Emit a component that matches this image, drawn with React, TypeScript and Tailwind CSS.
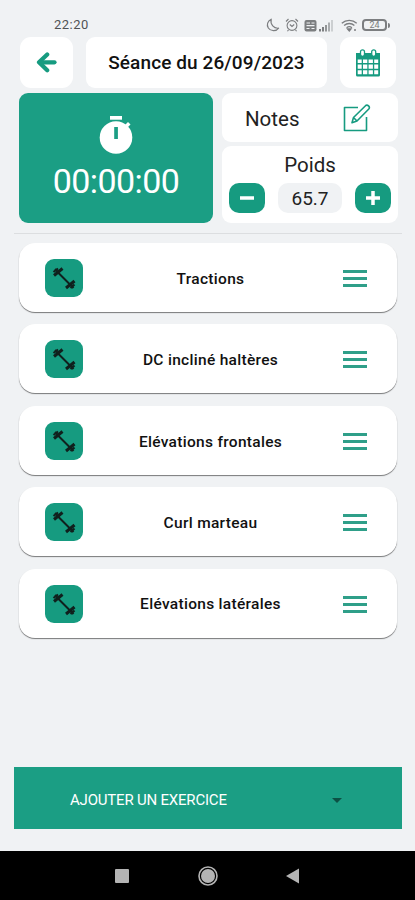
import { useState } from 'react';

const exercises = [
  'Tractions',
  'DC incliné haltères',
  'Elévations frontales',
  'Curl marteau',
  'Elévations latérales',
];

function StatusBar() {
  return (
    <div className="flex h-[37px] items-start justify-between pt-[17px] pr-[25px] pl-[54px] text-[#7c7e80]">
      <span className="text-[13px] leading-4 tracking-[0.5px] text-[#505254]">22:20</span>
      <div className="flex h-4 items-center">
        <svg className="mr-[5px] h-[14px] w-[14px]" viewBox="0 0 14 14" fill="none" stroke="currentColor" strokeWidth="1.2">
          <path d="M5.2 1.2C1.6 3 .3 7 2.3 10c2.2 3.4 8 3.6 10.3.2C8 10.7 4 6.5 5.2 1.2Z" strokeLinejoin="round" />
        </svg>
        <svg className="mr-[5px] h-[14px] w-[14px]" viewBox="0 0 14 14" fill="none" stroke="currentColor" strokeWidth="1.1">
          <circle cx="7" cy="7.5" r="4.9" />
          <path d="M1 3.5 3.5 1M13 3.5 10.5 1M4.8 6.5 7 8.5l2.2-2M3.5 11.8l-1 1.5M10.5 11.8l1 1.5" />
        </svg>
        <svg className="mr-[2px] h-[13px] w-[13px]" viewBox="0 0 13 13">
          <rect x="0.5" y="1" width="12" height="11.5" rx="2" fill="currentColor" />
          <path d="M2.5 4H6M7.5 4h3M2.5 6.6h8M2.5 9.5h3M7.5 9.5h3" stroke="#f0f2f4" strokeWidth="1.1" />
        </svg>
        <svg className="mr-[7px] h-[13px] w-[15px]" viewBox="0 0 15 13" fill="currentColor">
          <rect x="0" y="10" width="2" height="2.5" />
          <rect x="3" y="8" width="2" height="4.5" />
          <rect x="6" y="6" width="2" height="6.5" opacity=".8" />
          <rect x="9" y="3.5" width="2" height="9" opacity=".6" />
          <rect x="12" y="1" width="2" height="11.5" opacity=".3" />
        </svg>
        <svg className="mr-[4px] h-[13px] w-[17px]" viewBox="0 0 17 13" fill="none" stroke="currentColor" strokeWidth="1.3">
          <path d="M.8 4.2C5 .3 11.5.3 15.7 4.2M3.1 6.5c3-2.7 7.3-2.7 10.3 0M5.6 8.7c1.6-1.3 3.8-1.3 5.3 0" />
          <path d="M6.5 10H10l-1.7 2ZM13 11h2" fill="currentColor" />
        </svg>
        <div className="flex h-[12px] w-[25px] items-center justify-center rounded-[4px] border-2 border-current text-[9px] leading-none">
          24
        </div>
        <div className="ml-px h-[5px] w-[2px] rounded-r bg-current" />
      </div>
    </div>
  );
}

function CalendarIcon() {
  return (
    <svg className="h-[28px] w-[26px]" viewBox="0 0 26 28">
      <path d="M1 4h24v22a1.5 1.5 0 0 1-1.5 1.5h-21A1.5 1.5 0 0 1 1 26Z" fill="#169b80" />
      <rect x="5.5" y=".8" width="4" height="6.5" rx="2" fill="#fff" stroke="#169b80" strokeWidth="1.3" />
      <rect x="16.7" y=".8" width="4" height="6.5" rx="2" fill="#fff" stroke="#169b80" strokeWidth="1.3" />
      <path
        d="M2.7 10.5h4v3.6h-4zM8 10.5h4.3v3.6H8zM13.6 10.5h4.3v3.6h-4.3zM19.2 10.5h4v3.6h-4zM2.7 15.6h4v4.2h-4zM8 15.6h4.3v4.2H8zM13.6 15.6h4.3v4.2h-4.3zM19.2 15.6h4v4.2h-4zM2.7 21.3h4v4h-4zM8 21.3h4.3v4H8zM13.6 21.3h4.3v4h-4.3zM19.2 21.3h4v4h-4z"
        fill="#fff"
      />
    </svg>
  );
}

function Header() {
  return (
    <div className="flex h-[51px] pr-[19px] pl-[20px]">
      <button className="flex w-[53px] items-center justify-center rounded-[11px] bg-white">
        <svg className="h-[22px] w-[21px]" viewBox="0 0 21 22" fill="none" stroke="#169b80" strokeWidth="4.2" strokeLinejoin="round" strokeLinecap="round">
          <path d="M11.2 2.400 3 10.300l8.200 8" />
          <path d="M4 10.300h14.500" />
        </svg>
      </button>
      <div className="ml-[13px] flex w-[241px] items-center justify-center rounded-[9px] bg-white pt-px text-[19px] font-medium tracking-[0.1px] whitespace-nowrap text-[#111]">
        Séance du 26/09/2023
      </div>
      <button className="ml-[13px] flex w-[56px] items-center justify-center rounded-[11px] bg-white">
        <CalendarIcon />
      </button>
    </div>
  );
}

function Timer() {
  return (
    <div className="flex h-[130px] w-[194px] flex-col items-center rounded-[9px] bg-[#1b9e84] pt-[23px] text-white">
      <svg className="h-[38px] w-[34px]" viewBox="0 0 34 38">
        <circle cx="17" cy="21.5" r="16.3" fill="#fff" />
        <rect x="11" y="0" width="12" height="3.7" fill="#fff" />
        <path d="m26 9 3-3 2.5 2.5-3 3Z" fill="#fff" />
        <rect x="15.2" y="11" width="3.7" height="12" fill="#1b9e84" />
      </svg>
      <span className="mt-[7px] text-[34px] leading-[40px] tracking-[-0.6px]">00:00:00</span>
    </div>
  );
}

function WeightCard() {
  const [weight, setWeight] = useState(65.7);

  return (
    <div className="mt-[4px] flex h-[77px] flex-col items-center rounded-[9px] bg-white pt-[6px]">
      <span className="text-[20.5px] leading-[26px]">Poids</span>
      <div className="mt-[5px] flex w-full items-center justify-between pr-[7px] pl-[7px]">
        <button
          onClick={() => setWeight(weight - 0.1)}
          className="flex h-[30px] w-[36px] items-center justify-center rounded-[10px] bg-[#169b80]"
        >
          <svg className="h-4 w-4" viewBox="0 0 16 16" stroke="#fff" strokeWidth="3.5">
            <path d="M1 8h14" />
          </svg>
        </button>
        <div className="flex h-[30px] w-[64px] items-center justify-center rounded-[10px] bg-[#f0f2f4] pt-[2px] text-[19px]">
          {weight.toFixed(1)}
        </div>
        <button
          onClick={() => setWeight(weight + 0.1)}
          className="flex h-[30px] w-[36px] items-center justify-center rounded-[10px] bg-[#169b80]"
        >
          <svg className="h-4 w-4" viewBox="0 0 16 16" stroke="#fff" strokeWidth="3.5">
            <path d="M1 8h14M8 1v14" />
          </svg>
        </button>
      </div>
    </div>
  );
}

function NotesCard() {
  return (
    <div className="flex h-[49px] items-center justify-between rounded-[9px] bg-white pr-[27px] pl-[23px]">
      <span className="pt-[3px] text-[20.5px]">Notes</span>
      <svg className="h-[28px] w-[28px]" viewBox="0 0 28 28" fill="none" stroke="#169b80" strokeWidth="1.6" strokeLinejoin="round">
        <path d="M15 3.500H1.500v23h22V13" />
        <path d="m9 18.800 1.500-5.300L22.500 1.700c2-1.700 5 1.200 3.300 3.300L14 17ZM10.500 13.500 14 17" />
      </svg>
    </div>
  );
}

function DumbbellIcon() {
  return (
    <svg className="h-[24px] w-[24px]" viewBox="0 0 24 24" fill="none" stroke="#10201d">
      <path d="M5 5.500 19 19.500" strokeWidth="2" />
      <path d="m2 9.500 8.500-7M14 22l8.500-7" strokeWidth="3" />
      <path d="m1.500 6 4.500-3.500M18.500 22l4-3.500M3 3l3 3M18.500 19l3 3" strokeWidth="2.200" />
    </svg>
  );
}

function ExerciseCard({ name }: { name: string }) {
  return (
    <div className="flex h-[69px] items-center rounded-[16px] bg-white pt-px pr-[30px] pl-[26px] shadow-[0_1px_1px_rgba(0,0,0,0.5)]">
      <div className="flex h-[38px] w-[38px] items-center justify-center rounded-[9px] bg-[#169b80]">
        <DumbbellIcon />
      </div>
      <span className="flex-1 pt-[3px] pr-[5px] text-center text-[15.5px] font-medium tracking-[0.3px] whitespace-nowrap text-[#111]">
        {name}
      </span>
      <div className="flex w-[24px] flex-col gap-[4px] pt-px">
        <div className="h-[3px] bg-[#2f9f89]" />
        <div className="h-[3px] bg-[#2f9f89]" />
        <div className="h-[3px] bg-[#2f9f89]" />
      </div>
    </div>
  );
}

function NavigationBar() {
  return (
    <div className="flex h-[49px] items-center bg-black pl-[115px]">
      <div className="h-[14px] w-[14px] rounded-[1px] bg-[#b4b4b4]" />
      <svg className="ml-[69px] h-[20px] w-[20px]" viewBox="0 0 20 20">
        <circle cx="10" cy="10" r="9" fill="none" stroke="#b4b4b4" strokeWidth="1.6" />
        <circle cx="10" cy="10" r="7" fill="#b4b4b4" />
      </svg>
      <svg className="ml-[68px] h-[16px] w-[14px]" viewBox="0 0 14 16" fill="#b4b4b4">
        <path d="M0 8 13 .5v15Z" />
      </svg>
    </div>
  );
}

export default function App() {
  return (
    <div className="flex h-[900px] w-[415px] flex-col overflow-hidden bg-[#f0f2f4] font-['Roboto',sans-serif] text-[#222]">
      <StatusBar />
      <Header />

      <div className="mt-[5px] flex pl-[19px]">
        <Timer />
        <div className="ml-[9px] w-[176px]">
          <NotesCard />
          <WeightCard />
        </div>
      </div>

      <div className="mt-[10px] mr-[13px] ml-[14px] h-px bg-[#dcdee0]" />

      <div className="mt-[9px] flex flex-col gap-[12.4px] pr-[18px] pl-[19px]">
        {exercises.map((name) => (
          <ExerciseCard key={name} name={name} />
        ))}
      </div>

      <button className="mt-auto mr-[13px] mb-[22px] ml-[14px] flex h-[62px] items-center justify-between bg-[#1b9e84] pr-[60px] pl-[56px] text-[15px] tracking-[-0.2px] text-white">
        <span className="pt-[4px]">AJOUTER UN EXERCICE</span>
        <svg className="mt-[4px] h-[5px] w-[10px]" viewBox="0 0 10 5" fill="#0c5044">
          <path d="M0 0h10L5 5Z" />
        </svg>
      </button>

      <NavigationBar />
    </div>
  );
}
